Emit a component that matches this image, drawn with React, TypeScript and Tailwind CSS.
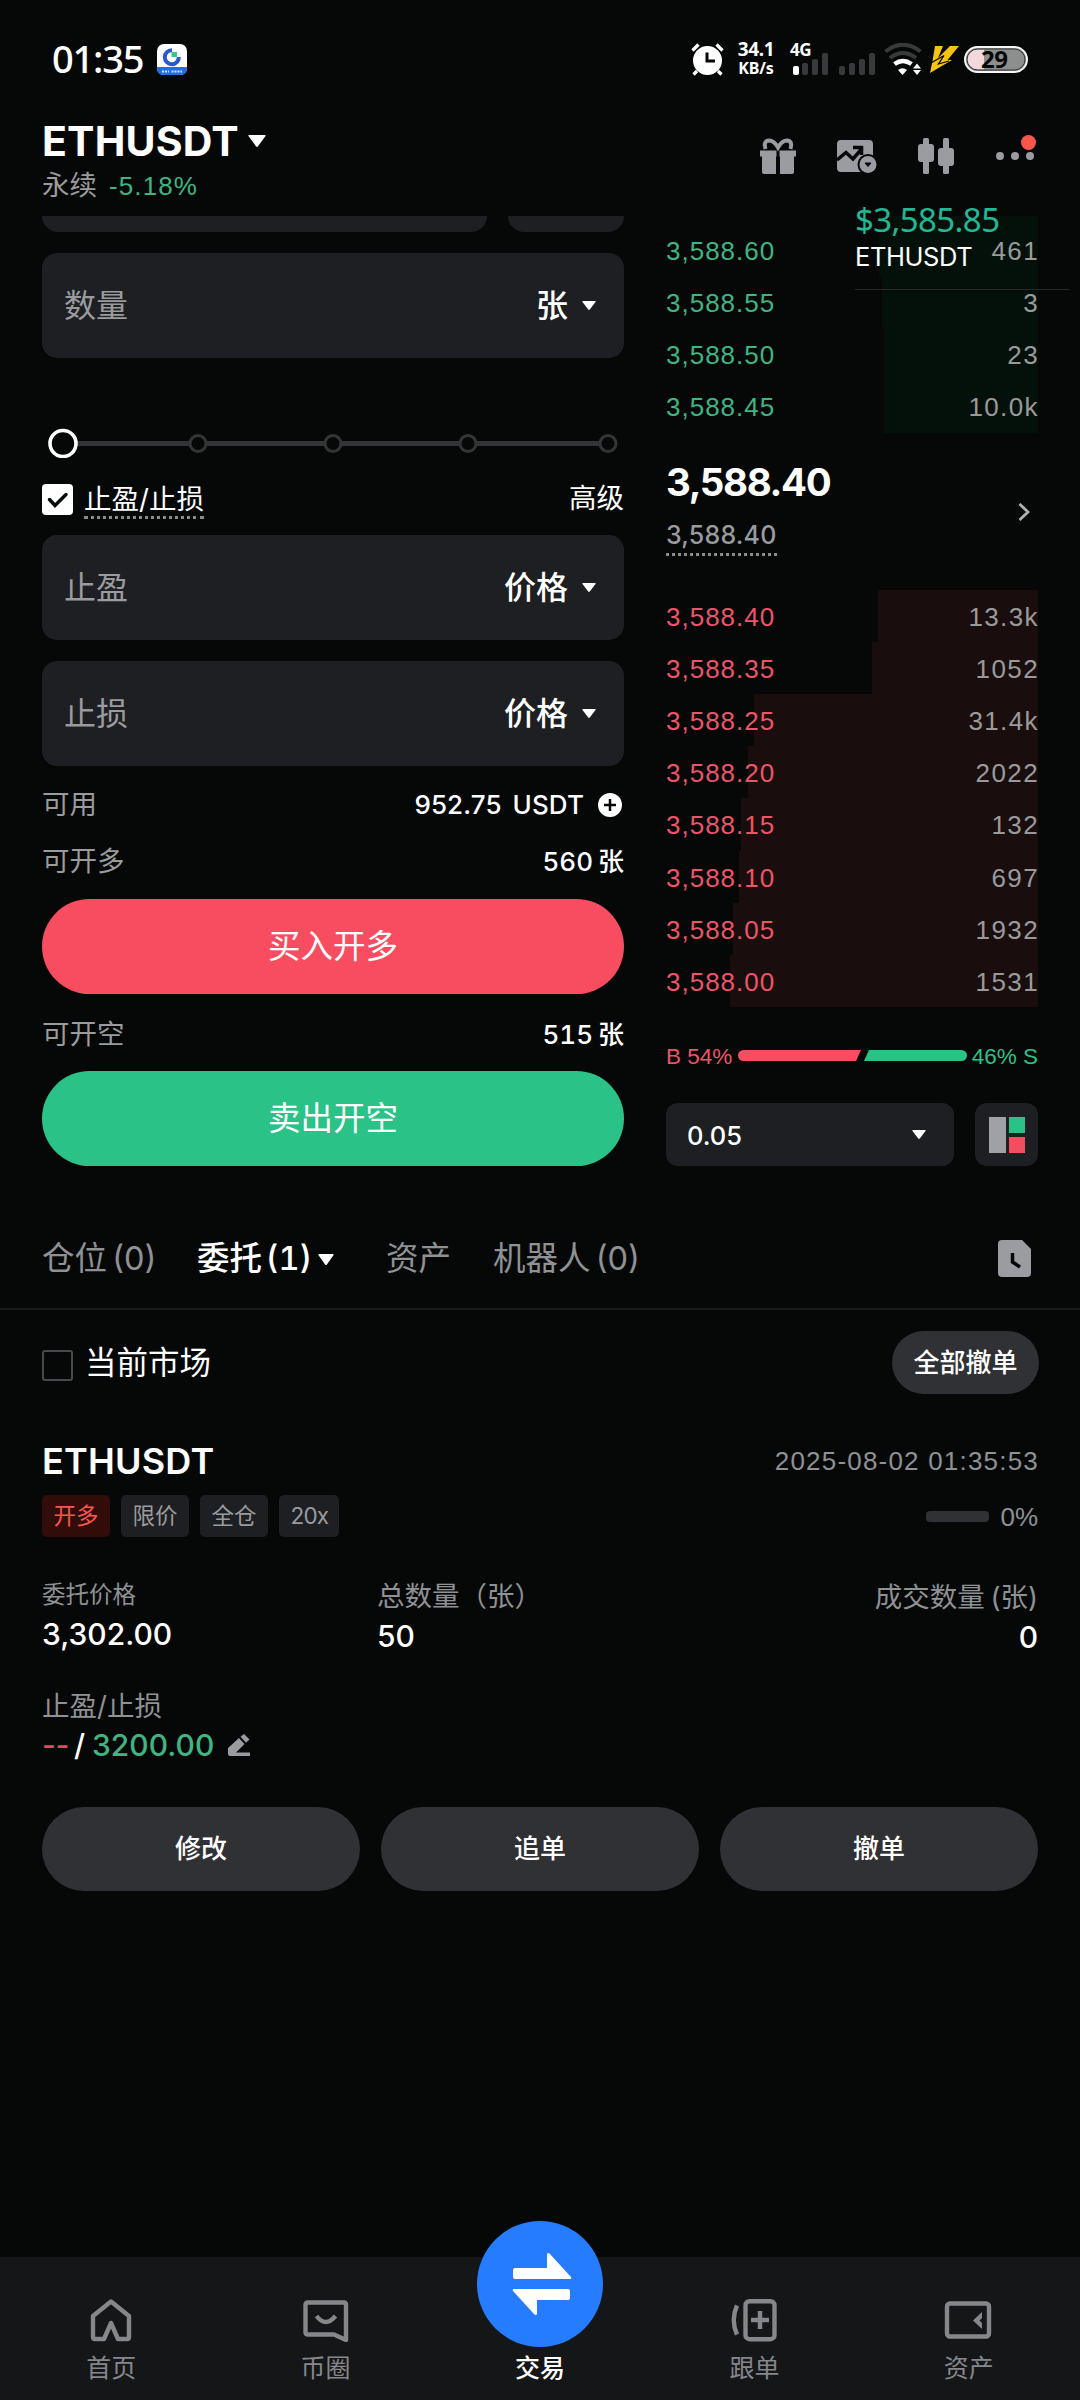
import React from 'react';

interface BookRow {
  price: string;
  amount: string;
  depth: number;
}

const longSide: BookRow[] = [
  { price: '3,588.60', amount: '461', depth: 159 },
  { price: '3,588.55', amount: '3', depth: 156 },
  { price: '3,588.50', amount: '23', depth: 154 },
  { price: '3,588.45', amount: '10.0k', depth: 154 },
];

const shortSide: BookRow[] = [
  { price: '3,588.40', amount: '13.3k', depth: 160 },
  { price: '3,588.35', amount: '1052', depth: 166 },
  { price: '3,588.25', amount: '31.4k', depth: 284 },
  { price: '3,588.20', amount: '2022', depth: 290 },
  { price: '3,588.15', amount: '132', depth: 297 },
  { price: '3,588.10', amount: '697', depth: 299 },
  { price: '3,588.05', amount: '1932', depth: 305 },
  { price: '3,588.00', amount: '1531', depth: 308 },
];

const Caret: React.FC<{ className?: string }> = ({ className = 'w-3.5 h-[9px]' }) => (
  <svg viewBox="0 0 14 9" preserveAspectRatio="none" className={className} fill="currentColor">
    <path d="M1 0H13Q14.3 0 13.5 1L7.8 8.5Q7 9.4 6.2 8.5L.5 1Q-.3 0 1 0Z" />
  </svg>
);

const StatusBar = () => (
  <div className="flex h-[118px] shrink-0 items-start justify-between pl-[52px] pr-[52px] pt-[43px]">
    <div className="flex h-8 items-center">
      <span className="-mt-[3px] w-[105px] font-['Noto_Sans'] text-[38px] font-medium leading-none tracking-[-1.2px]">01:35</span>
      <svg viewBox="0 0 30 31" className="h-[31px] w-[30px]">
        <rect width="30" height="31" rx="7" fill="#fff" />
        <path d="M0 23H30V24Q30 31 23 31H7Q0 31 0 24Z" fill="#1f6fe5" />
        <path d="M15 6.2A7 7 0 1 0 21.8 13" fill="none" stroke="#2b57cf" strokeWidth="4" />
        <rect x="14.5" y="8" width="5.5" height="5" fill="#35c98d" />
        <path d="M5 27.5H12M14.500 27.500H25" stroke="#cfe2ff" strokeWidth="2" strokeDasharray="2 1" />
      </svg>
    </div>
    <div className="flex h-8 items-center">
      <svg viewBox="0 0 33 33" className="h-[33px] w-[33px]">
        <circle cx="16.500" cy="17.500" r="14.500" fill="#fff" />
        <path d="M1.500 7.500L7.500 1.500M31.500 7.500L25.500 1.500M6 28L2.500 31.500M27 28L30.500 31.500" stroke="#fff" strokeWidth="3.200" />
        <path d="M16 9.500V18H24" fill="none" stroke="#060807" strokeWidth="3" />
      </svg>
      <div className="ml-[13px] flex w-[38px] flex-col items-center font-['Noto_Sans'] font-bold">
        <span className="text-[19px] leading-[18px] tracking-[-0.4px]">34.1</span>
        <span className="text-[16px] leading-[20px] tracking-[-0.1px]">KB/s</span>
      </div>
      <div className="relative ml-[15px] h-8 w-[86px]">
        <span className="absolute left-0 top-[-2px] font-['Noto_Sans'] text-[17px] font-bold leading-[18px] tracking-[-0.5px]">4G</span>
        <svg viewBox="0 0 86 32" className="h-8 w-[86px]">
          <rect x="3" y="23" width="6" height="9" rx="2" fill="#fff" />
          <g fill="#38393a">
            <rect x="12" y="20" width="6" height="12" rx="2" />
            <rect x="22" y="16" width="6" height="16" rx="2" />
            <rect x="32" y="10" width="6" height="22" rx="2" />
            <rect x="49" y="23" width="6" height="9" rx="2" />
            <rect x="59" y="20" width="6" height="12" rx="2" />
            <rect x="69" y="16" width="6" height="16" rx="2" />
            <rect x="79" y="10" width="6" height="22" rx="2" />
          </g>
        </svg>
      </div>
      <svg viewBox="0 0 38 32" className="ml-2 h-8 w-[38px]" fill="none">
        <path d="M1.500 8.500Q19 -5 36.500 8.500" stroke="#38393a" strokeWidth="4" />
        <path d="M6 15Q19 5 32 15" stroke="#38393a" strokeWidth="4" />
        <path d="M10.500 21Q19 15 27.500 21" stroke="#fff" strokeWidth="4.500" />
        <path d="M14 27Q18.500 23.500 23 27L18.500 32Z" fill="#fff" />
        <path d="M33 20.500L37 25.500H29ZM29 27H37L33 32Z" fill="#fff" />
      </svg>
      <svg viewBox="0 0 29 27" className="ml-2 h-[27px] w-[29px]">
        <path d="M5 0H13L8 12L20 0H29L17.500 14H22L0 27L2.500 15Z" fill="#f8c414" />
        <path d="M0 17.500L14 9.500L8.500 18L19 15" fill="none" stroke="#060807" strokeWidth="1.300" />
      </svg>
      <div className="relative ml-[5px] h-[27px] w-16">
        <svg viewBox="0 0 64 27" className="h-[27px] w-16">
          <rect x="1" y="1" width="62" height="25" rx="12.500" fill="#8d8e8e" stroke="#f5f5f5" strokeWidth="2" />
          <path d="M20 3.500H13.500A10 10 0 0 0 13.500 23.500H20Z" fill="#f2d7dc" />
          <rect x="3" y="3" width="58" height="21" rx="10.500" fill="none" stroke="#333" strokeWidth="1" />
        </svg>
        <span className="absolute left-[17px] top-0 font-['Noto_Sans'] text-[24px] font-bold leading-[26px] tracking-[-0.5px] text-[#060807]">29</span>
      </div>
    </div>
  </div>
);

const Header = () => (
  <header className="flex h-[98px] shrink-0 items-start justify-between pl-[42px] pr-[46px]">
    <div>
      <div className="flex h-[46px] items-center">
        <h1 className="w-[206px] text-[41px] font-bold leading-none tracking-[0.2px]">ETHUSDT</h1>
        <Caret className="h-3 w-[18px]" />
      </div>
      <div className="flex h-[43px] items-center leading-none">
        <span className="w-[67px] text-[27.500px] text-[#9a9b9e]">永续</span>
        <span className="font-['Liberation_Sans'] text-[26px] tracking-[1.1px] text-[#3fb583]">-5.18%</span>
      </div>
    </div>
    <div className="flex h-9 items-center pt-[38px] text-[#9a9ca1]">
      <svg viewBox="0 0 36 36" className="h-9 w-9" fill="currentColor">
        <path d="M0 12.500H16.500V18.500H0ZM19.500 12.500H36V18.500H19.500ZM2 18.500H16V36H4Q2 36 2 34ZM20 18.500H34V34Q34 36 32 36H20Z" />
        <path d="M5.500 11Q3 3 9 2.500Q14 2.500 18 9.500Q22 2.500 27 2.500Q33 3 30.500 11" fill="none" stroke="currentColor" strokeWidth="4" />
      </svg>
      <svg viewBox="0 0 40 34" className="ml-[41px] h-[34px] w-10">
        <rect y="1" width="36" height="32" rx="4" fill="currentColor" />
        <path d="M0 21L9 13.500L16 20L25 9.500" fill="none" stroke="#060807" strokeWidth="3.500" />
        <path d="M16 8.500H24.500V16" fill="none" stroke="#060807" strokeWidth="3.500" />
        <circle cx="31" cy="25.500" r="10.500" fill="#060807" />
        <circle cx="31" cy="25.500" r="8.500" fill="currentColor" />
        <path d="M28 24H34L31 27.500Z" fill="#060807" stroke="#060807" />
      </svg>
      <svg viewBox="0 0 36 36" className="ml-[41px] h-9 w-9" fill="currentColor">
        <rect x="5" y="0" width="6" height="36" rx="1.500" />
        <rect y="6" width="16" height="18" rx="3" />
        <rect x="25" y="0" width="6" height="36" rx="1.500" />
        <rect x="20" y="10" width="16" height="18" rx="3" />
      </svg>
      <div className="relative ml-[42px] flex h-9 w-[38px] items-center justify-between">
        <i className="h-2 w-2 rounded-sm bg-current" />
        <i className="h-2 w-2 rounded-sm bg-current" />
        <i className="h-2 w-2 rounded-sm bg-current" />
        <i className="absolute -right-0.5 -top-[3px] h-[15px] w-[15px] rounded-full bg-[#fb564b]" />
      </div>
    </div>
  </header>
);

const Field: React.FC<{ label: string; unit: string }> = ({ label, unit }) => (
  <div className="flex h-[105px] shrink-0 items-center justify-between rounded-[15px] bg-[#1e1f22] pl-[22px] pr-7 text-[32px] leading-none">
    <span className="text-[#9a9b9e]">{label}</span>
    <span className="flex items-center gap-3.5 font-medium">
      {unit}
      <Caret />
    </span>
  </div>
);

const Slider = () => (
  <svg viewBox="0 0 582 30" className="mt-[70px] h-[30px] w-full shrink-0" fill="#060807">
    <path d="M21 15.500H566" stroke="#333436" strokeWidth="5" />
    {[156, 291, 426, 566].map((x) => (
      <circle key={x} cx={x} cy="15.500" r="8" stroke="#333436" strokeWidth="3" />
    ))}
    <circle cx="21" cy="15.500" r="13" stroke="#fff" strokeWidth="3.600" />
  </svg>
);

const OrderForm = () => (
  <section className="flex w-[582px] flex-col">
    <div className="flex h-4 shrink-0 gap-[21px]">
      <div className="w-[445px] rounded-b-[16px] bg-[#1e1f22]" />
      <div className="flex-1 rounded-b-[16px] bg-[#1e1f22]" />
    </div>
    <div className="mt-[21px] flex flex-col">
      <Field label="数量" unit="张" />
    </div>
    <Slider />
    <div className="mt-[26px] flex h-[30px] items-center justify-between text-[27.500px] leading-none">
      <div className="flex items-center">
        <svg viewBox="0 0 31 31" className="mr-[11px] h-[31px] w-[31px]">
          <rect width="31" height="31" rx="4" fill="#fff" />
          <path d="M7.500 15.500L13 21.500L24 10.500" fill="none" stroke="#060807" strokeWidth="3.500" strokeLinecap="round" />
        </svg>
        <span className="-mb-[5px] border-b-[3px] border-dotted border-[#8a8b8e] pb-0.5 leading-[30px]">止盈/止损</span>
      </div>
      <span>高级</span>
    </div>
    <div className="mt-[21px] flex flex-col gap-[21px]">
      <Field label="止盈" unit="价格" />
      <Field label="止损" unit="价格" />
    </div>
    <div className="mt-[11px] flex h-14 items-center justify-between text-[27.500px] leading-none">
      <span className="text-[#9a9b9e]">可用</span>
      <span className="flex items-center text-[26px] font-medium">
        <span className="tracking-[0.1px] [word-spacing:4px]">952.75 USDT</span>
        <svg viewBox="0 0 24 24" className="ml-3.5 mr-0.5 h-6 w-6">
          <circle cx="12" cy="12" r="12" fill="#fff" />
          <path d="M12 6V18M6 12H18" stroke="#060807" strokeWidth="2.500" />
        </svg>
      </span>
    </div>
    <div className="flex h-[58px] items-center justify-between text-[27.500px] leading-none">
      <span className="text-[#9a9b9e]">可开多</span>
      <span className="text-[26px] font-medium tabular-nums [word-spacing:-2px]">560 张</span>
    </div>
    <button className="mt-2 h-[95px] shrink-0 rounded-full bg-[#f84d61] pt-0.5 text-[32.500px] leading-none">买入开多</button>
    <div className="mt-3 flex h-[58px] items-center justify-between text-[27.500px] leading-none">
      <span className="text-[#9a9b9e]">可开空</span>
      <span className="text-[26px] font-medium tabular-nums [word-spacing:-2px]">515 张</span>
    </div>
    <button className="mt-[7px] h-[95px] shrink-0 rounded-full bg-[#2bc287] pt-0.5 text-[32.500px] leading-none">卖出开空</button>
  </section>
);

const Row: React.FC<{ row: BookRow; side: 'long' | 'short' }> = ({ row, side }) => {
  const long = side === 'long';
  return (
    <div
      className={`relative flex items-center justify-between font-['Liberation_Sans'] text-[26px] leading-none ${
        long ? 'h-[52px]' : 'h-[52.100px] pt-0.5'
      }`}
    >
      <div
        className={`absolute inset-y-0 right-0 ${long ? 'bg-[#04110a]' : 'bg-[#190e0d]'}`}
        style={{ width: row.depth }}
      />
      <span className={`relative tracking-[1px] ${long ? 'text-[#3fb583]' : 'text-[#ee5467]'}`}>{row.price}</span>
      <span className="relative -mr-px tracking-[1.4px] text-[#9b9a9b]">{row.amount}</span>
    </div>
  );
};

const OrderBook = () => (
  <section className="flex w-[372px] flex-col">
    <div className="ml-auto h-[9px] w-[159px] shrink-0 bg-[#04110a]" />
    {longSide.map((row) => (
      <Row key={row.price} row={row} side="long" />
    ))}
    <div className="flex h-[157px] shrink-0 items-center justify-between pr-2">
      <div className="flex flex-col items-start pb-2.5">
        <span className="text-[38.500px] font-bold leading-[48px] tracking-[-1.4px]">3,588.40</span>
        <span className="mt-3 border-b-[3px] border-dotted border-[#8a8b8e] text-[25px] font-medium leading-[35px] tracking-[0.2px] text-[#9a9b9e]">3,588.40</span>
      </div>
      <svg viewBox="0 0 12 18" className="h-[18px] w-3" fill="none">
        <path d="M1.500 1L10 9L1.500 17" stroke="#b0b1b3" strokeWidth="2.800" />
      </svg>
    </div>
    {shortSide.map((row) => (
      <Row key={row.price} row={row} side="short" />
    ))}
    <div className="mt-[37px] flex h-6 items-center justify-between font-['Liberation_Sans'] text-[22.500px] leading-none">
      <span className="mt-0.5 text-[#ee5467]">B 54%</span>
      <svg viewBox="0 0 229 11" className="h-[11px] w-[229px]">
        <path d="M5.500 0H123L118 11H5.500A5.500 5.500 0 0 1 5.500 0Z" fill="#f84d61" />
        <path d="M131 0H223.500A5.500 5.500 0 0 1 223.500 11H126Z" fill="#2bc287" />
      </svg>
      <span className="mt-0.5 text-[#2bc287]">46% S</span>
    </div>
    <div className="mt-auto flex h-[63px] gap-[21px]">
      <div className="flex w-[288px] items-center justify-between rounded-[12px] bg-[#1e1f22] pl-[21px] pr-7">
        <span className="mt-0.5 text-[25.500px] font-medium leading-none">0.05</span>
        <Caret />
      </div>
      <div className="flex w-[63px] items-center justify-center rounded-[12px] bg-[#1e1f22]">
        <svg viewBox="0 0 36 36" className="h-9 w-9">
          <rect width="17" height="36" fill="#9fa1a7" />
          <rect x="20" width="16" height="16" fill="#2bc287" />
          <rect x="20" y="20" width="16" height="16" fill="#f04f5e" />
        </svg>
      </div>
    </div>
  </section>
);

const FloatingTicker = () => (
  <div className="absolute left-[855px] top-[199px] flex h-[91px] w-[214px] flex-col border-b border-[#26282a]">
    <span className="font-['Noto_Sans'] text-[33px] leading-[42px] tracking-[-0.6px] text-[#22b795]">$3,585.85</span>
    <span className="text-[25.500px] leading-[32px] tracking-[-0.4px]">ETHUSDT</span>
  </div>
);

const Tabs = () => (
  <nav className="flex h-[144px] shrink-0 items-center border-b-2 border-[#17191b] px-[42px] pt-[44px] text-[32.500px] leading-none text-[#8f9194]">
    <span className="w-[155px] [word-spacing:-4px]">仓位 (0)</span>
    <span className="flex w-[189px] items-center gap-1.5 font-medium tabular-nums text-white [word-spacing:-5px]">
      委托 (1)
      <Caret className="h-[11px] w-4" />
    </span>
    <span className="w-[107px]">资产</span>
    <span className="[word-spacing:-4px]">机器人 (0)</span>
    <svg viewBox="0 0 33 37" className="-mt-0.5 ml-auto mr-[7px] h-[37px] w-[33px]">
      <path d="M4 0H24L33 9V33Q33 37 29 37H4Q0 37 0 33V4Q0 0 4 0Z" fill="#9a9ca1" />
      <path d="M14.500 13V22L22 27" fill="none" stroke="#060807" strokeWidth="3.500" />
    </svg>
  </nav>
);

const Tag: React.FC<{ children: React.ReactNode; active?: boolean }> = ({ children, active }) => (
  <span
    className={`flex h-[42px] items-center rounded-[5px] px-[11.500px] text-[22.500px] ${
      active ? 'bg-[#310c08] text-[#f7594c]' : 'bg-[#1e1f22] text-[#9a9b9e]'
    }`}
  >
    {children}
  </span>
);

const OrderCard = () => (
  <article className="flex flex-col px-[42px] leading-none">
    <div className="mt-[46px] flex h-[42px] items-center justify-between">
      <h2 className="text-[36px] font-semibold tracking-[0.2px]">ETHUSDT</h2>
      <span className="-mr-px font-['Liberation_Sans'] text-[26px] tracking-[1.2px] text-[#8f9194]">2025-08-02 01:35:53</span>
    </div>
    <div className="mt-[13px] flex items-center gap-[11px]">
      <Tag active>开多</Tag>
      <Tag>限价</Tag>
      <Tag>全仓</Tag>
      <Tag>
        <span className="-mr-[1px] tracking-[-0.8px]">20x</span>
      </Tag>
      <div className="ml-auto h-[11px] w-[63px] rounded-sm bg-[#303135]" />
      <span className="mt-0.5 font-['Liberation_Sans'] text-[26px] text-[#8f9194]">0%</span>
    </div>
    <div className="mt-[40px] flex h-[80px]">
      <div className="flex w-[335px] flex-col">
        <span className="flex h-[37px] items-center text-[23.500px] text-[#8f9194]">委托价格</span>
        <span className="flex h-[48px] items-center text-[30px] font-medium">3,302.00</span>
      </div>
      <div className="flex flex-col">
        <span className="flex h-[39px] items-center text-[27.500px] text-[#8f9194]">总数量（张）</span>
        <span className="flex h-[39px] items-center text-[30px] font-medium">50</span>
      </div>
      <div className="ml-auto flex flex-col items-end">
        <span className="flex h-[41px] items-center text-[27.500px] text-[#8f9194] [word-spacing:-2px]">成交数量 (张)</span>
        <span className="flex h-[37px] items-center text-[30px] font-medium">0</span>
      </div>
    </div>
    <div className="mt-[32px] flex h-[36px] items-center text-[27.500px] text-[#8f9194]">止盈/止损</div>
    <div className="flex h-10 items-center text-[30px] font-medium">
      <span className="w-8 tracking-[-0.3px] text-[#dd4d61]">--</span>
      <span className="w-[18px]">/</span>
      <span className="text-[#3fb583]">3200.00</span>
      <svg viewBox="0 0 23 22" className="ml-auto mr-[787px] h-[22px] w-[23px]" fill="#9a9ca1">
        <path d="M0 20V14L11 4L16.500 10L8 18.500H22V22H2Q0 22 0 20Z" />
        <path d="M12.500 2.800L16 0L21.500 5.500L18 8.700Z" />
      </svg>
    </div>
    <div className="mt-[42px] flex h-[84px] gap-[21px] text-[26px] font-medium">
      <button className="flex-1 rounded-full bg-[#303135]">修改</button>
      <button className="flex-1 rounded-full bg-[#303135]">追单</button>
      <button className="flex-1 rounded-full bg-[#303135]">撤单</button>
    </div>
  </article>
);

const navIcon = 'h-[44px] w-[50px]';

const BottomNav = () => (
  <nav className="mt-auto flex h-[143px] shrink-0 items-end justify-between bg-[#151618] px-1 pb-[19px] text-[25px] leading-none text-[#85878b]">
    <div className="flex flex-1 flex-col items-center gap-3.5">
      <svg viewBox="0 0 50 44" className={navIcon} fill="none" stroke="currentColor" strokeWidth="4.400" strokeLinejoin="round">
        <path d="M25 3.500L43 18V39Q43 41 41 41H32L25 25L18 41H9Q7 41 7 39V18Z" />
      </svg>
      <span>首页</span>
    </div>
    <div className="flex flex-1 flex-col items-center gap-3.5">
      <svg viewBox="0 0 50 44" className={navIcon} fill="none" stroke="currentColor" strokeWidth="4.400" strokeLinejoin="round">
        <path d="M7 4.500H43Q45 4.500 45 7V42L33 36.500H7Q4.500 36.500 4.500 34V7Q4.500 4.500 7 4.500Z" />
        <path d="M15.500 18Q24.500 30 34.500 18" />
      </svg>
      <span>币圈</span>
    </div>
    <div className="relative flex flex-1 flex-col items-center text-white">
      <div className="absolute bottom-[34px] flex h-[126px] w-[126px] items-center justify-center rounded-full bg-[#257cff]">
        <svg viewBox="0 0 60 62" className="ml-[3px] h-[62px] w-[60px]" fill="#fff">
          <path d="M3 15H35V1Q36 -1 38 1L59 24Q60 26 58 26H3Q1 26 1 24V17Q1 15 3 15Z" />
          <path d="M2 36H56Q58 36 58 38V45Q58 47 56 47H25V61Q24 63 22 61L1 38Q0 36 2 36Z" />
        </svg>
      </div>
      <span className="font-medium">交易</span>
    </div>
    <div className="flex flex-1 flex-col items-center gap-3.5">
      <svg viewBox="0 0 50 44" className={navIcon} fill="none" stroke="currentColor" strokeWidth="4.400">
        <rect x="16.500" y="3.200" width="29" height="38" rx="4" />
        <path d="M31 13V31M22 22H40M8 7.500Q1.500 22 8 36.500" />
      </svg>
      <span>跟单</span>
    </div>
    <div className="flex flex-1 flex-col items-center gap-3.5">
      <svg viewBox="0 0 50 44" className={navIcon} fill="none" stroke="currentColor" strokeWidth="4.400">
        <rect x="3" y="5.500" width="42" height="33" rx="3" />
        <path d="M38 14V31L29 22.500Z" fill="currentColor" stroke="none" />
        <path d="M39 19V26L35.500 22.500Z" fill="#151618" stroke="none" />
      </svg>
      <span>资产</span>
    </div>
  </nav>
);

const App: React.FC = () => {
  return (
    <div className="relative flex h-[2400px] w-[1080px] flex-col overflow-hidden whitespace-nowrap bg-[#060807] font-[Inter,'Noto_Sans_CJK_SC',sans-serif] text-white">
      <StatusBar />
      <Header />
      <main className="flex h-[950px] shrink-0 justify-between px-[42px]">
        <OrderForm />
        <OrderBook />
      </main>
      <FloatingTicker />
      <Tabs />
      <div className="mt-[21px] flex h-[63px] shrink-0 items-center justify-between pl-[42px] pr-[41px] leading-none">
        <div className="flex items-center gap-3 text-[31.500px]">
          <i className="mt-[5px] h-[31px] w-[31px] rounded-[3px] border-2 border-[#48494c]" />
          <span>当前市场</span>
        </div>
        <button className="h-full w-[147px] rounded-full bg-[#303135] text-[26px] font-medium">全部撤单</button>
      </div>
      <OrderCard />
      <BottomNav />
    </div>
  );
};

export default App;
